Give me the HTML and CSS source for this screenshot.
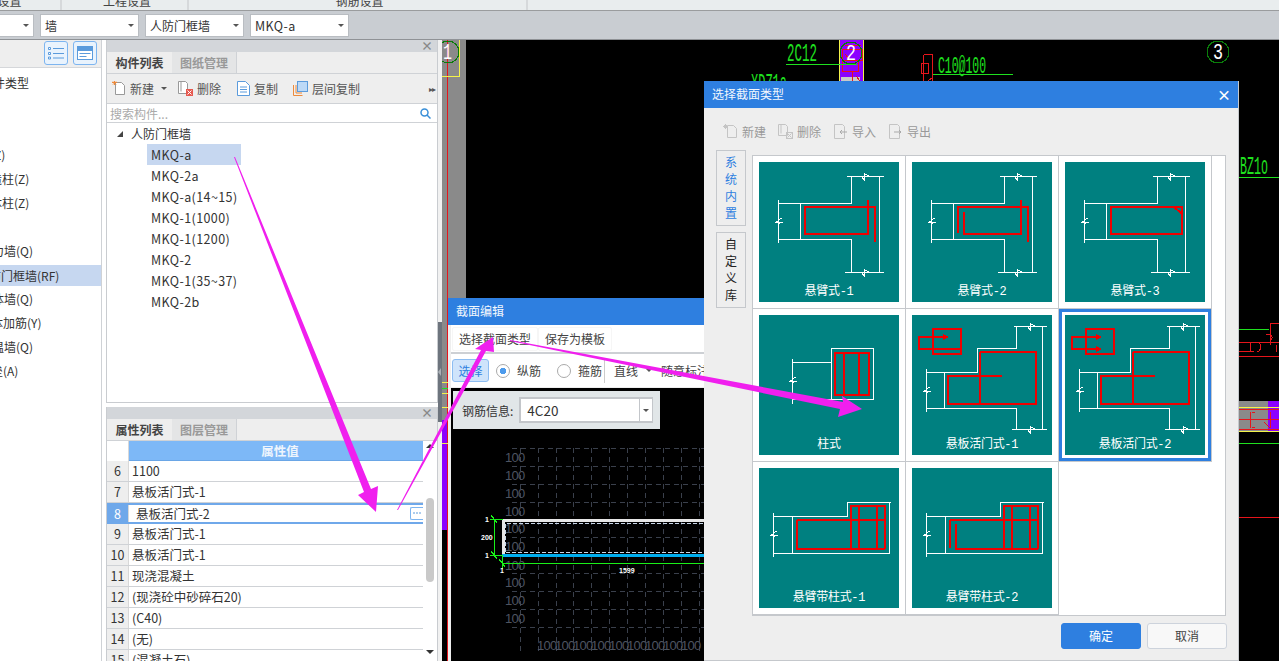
FILE: index.html
```html
<!DOCTYPE html>
<html lang="zh-CN">

<head>
    <meta charset="UTF-8">
    <title>截面编辑</title>
    <link rel="stylesheet" href="styles.css">
</head>

<body>
    <!-- shared drawing parts for the section type cards -->
    <svg class="defs" width="0" height="0">
        <defs>
            <g id="brk"><path d="M-4 1H4M3-3L-2 1 1 3"/></g>
            <g id="tick"><path d="M0-4V4M0-3L4-1 0 1M-2 1L0 3"/></g>
            <g id="wall-a">
                <path d="M88 14.5H125M92.5 14.5V41.5H19.5M19.5 38V81M41.5 41.5V77.5M19.5 77.5H92.5V110.5M86 110.5H125M120.5 14.5V110.5"/>
                <use href="#brk" x="19.5" y="59"/>
                <use href="#tick" x="105" y="14.5"/>
                <use href="#tick" x="105" y="110.5"/>
            </g>
            <g id="wall-b">
                <path d="M101.5 11.5H134.5M104.5 11.5V33.5H65.5V57.5H14.5M14.5 54V97M32.5 57.5V93.5M14.5 93.5H104.5V114.5M100 114.5H134.5M130.5 11.5V114.5"/>
                <use href="#brk" x="14.5" y="75"/>
                <use href="#tick" x="118" y="11.5"/>
                <use href="#tick" x="118" y="114.5"/>
            </g>
            <g id="wall-c">
                <path d="M14.5 48.5H88.5V34.5H132M14.5 45V89M33.5 48.5V85.5M14.5 85.5H130.5V34.5"/>
                <use href="#brk" x="14.5" y="66"/>
            </g>
            <g id="rebar-b">
                <path d="M68 37H124V89H36V61H90M68 37V89"/>
            </g>
            <g id="rebar-c">
                <path d="M92 81V38H126V81M100 38V81M118 38V81M38 52H126"/>
            </g>
        </defs>
    </svg>

    <div class="app">
        <div class="menubar">
            <span class="menu-cell menu-a">钢筋设置</span>
            <span class="menu-cell menu-b">工程设置</span>
            <span class="menu-cell menu-c">钢筋设置</span>
        </div>

        <div class="toolbar">
            <div class="combo combo-first"><i class="caret"></i></div>
            <div class="combo"><span>墙</span><i class="caret"></i></div>
            <div class="combo"><span>人防门框墙</span><i class="caret"></i></div>
            <div class="combo"><span class="latin">MKQ-a</span><i class="caret"></i></div>
        </div>

        <div class="workspace">
            <div class="nav">
                <div class="nav-head">
                    <span class="view-btn">
                        <svg width="18" height="14" viewBox="0 0 18 14"><path class="ico-blue" d="M1.5 1.5h2v2h-2zM1.5 6.5h2v2h-2zM1.5 11h2v2h-2zM6 2.5h11M6 7.5h11M6 12h11"/></svg>
                    </span>
                    <span class="view-btn">
                        <svg width="16" height="14" viewBox="0 0 16 14"><rect class="ico-blue" x=".5" y=".5" width="15" height="13"/><rect class="ico-fill" x=".5" y=".5" width="15" height="4.5"/><path class="ico-blue" d="M2.500 7.500h11M2.500 10.500h7"/></svg>
                    </span>
                </div>
                <div class="nav-list">
                    <div class="nav-item cut-a gap-1">构件类型</div>
                    <div class="nav-item cut-b gap-2">框架柱(Z)</div>
                    <div class="nav-item cut-c">构造柱(Z)</div>
                    <div class="nav-item cut-c">砌体柱(Z)</div>
                    <div class="nav-item cut-d gap-1">剪力墙(Q)</div>
                    <div class="nav-item cut-e selected">人防门框墙(RF)</div>
                    <div class="nav-item cut-d">砌体墙(Q)</div>
                    <div class="nav-item cut-f">砌体加筋(Y)</div>
                    <div class="nav-item cut-d">保温墙(Q)</div>
                    <div class="nav-item cut-g">墙垛墙垒(A)</div>
                </div>
            </div>

            <div class="panels">
                <div class="panel panel-top">
                    <div class="panel-title"><span class="close">×</span></div>
                    <div class="tabs">
                        <span class="tab active">构件列表</span>
                        <span class="tab">图纸管理</span>
                    </div>
                    <div class="actions">
                        <span class="action act-new">
                            <svg width="14" height="15" viewBox="0 0 14 15"><path class="ico-gray" d="M3.500 1.500h6l3 3v9h-9z"/><path class="ico-orange" d="M0 1.500h5M2.500 0v4M1 .5l3 3M4 .5l-3 3"/></svg>
                            新建<i class="caret"></i>
                        </span>
                        <span class="action act-del">
                            <svg width="15" height="15" viewBox="0 0 15 15"><path class="ico-gray" d="M.5.500h7l2 2v10h-9zM3 .5v10"/><rect class="ico-red" x="8" y="8" width="7" height="7"/><path class="ico-white" d="M9.500 9.500l4 4M13.500 9.500l-4 4"/></svg>
                            删除
                        </span>
                        <span class="action act-copy">
                            <svg width="13" height="15" viewBox="0 0 13 15"><path class="ico-blue" d="M.5.500h8l4 4v10H.5zM3 6h7M3 8.500h7M3 11h7"/></svg>
                            复制
                        </span>
                        <span class="action act-floor">
                            <svg width="15" height="15" viewBox="0 0 15 15"><path class="ico-orange" d="M.5 4v10.500h9"/><path class="ico-orange" d="M3 4v8h6"/><rect class="ico-sky" x="4.500" y=".5" width="10" height="10"/></svg>
                            层间复制
                        </span>
                        <span class="more">▸▸</span>
                    </div>
                    <div class="search">
                        <span>搜索构件...</span>
                        <svg width="11" height="11" viewBox="0 0 11 11"><circle class="ico-mag" cx="4.500" cy="4.500" r="3.500"/><path class="ico-mag" d="M7 7l3.500 3.500"/></svg>
                    </div>
                    <div class="tree">
                        <div class="tree-root"><i class="tree-arrow"></i>人防门框墙</div>
                        <div class="tree-item selected">MKQ-a</div>
                        <div class="tree-item">MKQ-2a</div>
                        <div class="tree-item">MKQ-a(14~15)</div>
                        <div class="tree-item">MKQ-1(1000)</div>
                        <div class="tree-item">MKQ-1(1200)</div>
                        <div class="tree-item">MKQ-2</div>
                        <div class="tree-item">MKQ-1(35~37)</div>
                        <div class="tree-item">MKQ-2b</div>
                    </div>
                </div>

                <div class="panel panel-bottom">
                    <div class="panel-title"><span class="close">×</span></div>
                    <div class="tabs">
                        <span class="tab active">属性列表</span>
                        <span class="tab">图层管理</span>
                    </div>
                    <div class="table">
                        <div class="table-rows">
                            <div class="thead"><span class="num"></span><span class="th">属性值</span></div>
                            <div class="row"><span class="num">6</span><span class="val">1100</span></div>
                            <div class="row"><span class="num">7</span><span class="val">悬板活门式-1</span></div>
                            <div class="row current">
                                <span class="num">8</span><span class="val">悬板活门式-2</span>
                                <span class="dots"><svg width="11" height="11" viewBox="0 0 11 11"><path class="dot-path" d="M2 5h2M5 5h2M8 5h2"/></svg></span>
                            </div>
                            <div class="row"><span class="num">9</span><span class="val">悬板活门式-1</span></div>
                            <div class="row"><span class="num">10</span><span class="val">悬板活门式-1</span></div>
                            <div class="row"><span class="num">11</span><span class="val">现浇混凝土</span></div>
                            <div class="row"><span class="num">12</span><span class="val">(现浇砼中砂碎石20)</span></div>
                            <div class="row"><span class="num">13</span><span class="val">(C40)</span></div>
                            <div class="row"><span class="num">14</span><span class="val">(无)</span></div>
                            <div class="row"><span class="num">15</span><span class="val">(混凝土石)</span></div>
                        </div>
                        <div class="vscroll">
                            <i class="arrow-up"></i>
                            <i class="thumb"></i>
                            <i class="arrow-down"></i>
                        </div>
                    </div>
                </div>
            </div>

            <div class="gutter">
                <div class="gutter-grip"><i></i></div>
            </div>

            <div class="canvas">
                <svg class="cad" width="837" height="621" viewBox="442 40 837 621">
                    <rect x="442" y="40" width="24" height="380" fill="#8a8a8a"/>
                    <rect x="442" y="420" width="5" height="110" fill="#8b00ff"/>
                    <path class="cad-red" d="M447.500 40V661"/>
                    <path class="cad-yel" d="M442 76.500H459.500V40M442 382.500H448M442 393.500H448M442 407.500H448M442 443.500H448"/>
                    <path class="cad-grn" d="M442 388.500H448"/>
                    <circle class="cad-dark" cx="448" cy="52" r="11"/>
                    <text class="cad-num" x="443" y="59" textLength="9" lengthAdjust="spacingAndGlyphs">1</text>

                    <rect x="840" y="40" width="23" height="41" fill="#8b00ff"/>
                    <path class="cad-yel" d="M839.500 40V81M863.500 40V81"/>
                    <rect x="841" y="77" width="19" height="4" fill="#c8c8c8"/>
                    <path class="cad-red" d="M842 49H862V60H842ZM845 54L850 60M858 60V71H842V50M852 71V81M856 76L860 81M845 45H861"/>
                    <circle class="cad-dark" cx="851" cy="53" r="11"/>
                    <text class="cad-num" x="846" y="60" textLength="10" lengthAdjust="spacingAndGlyphs">2</text>
                    <circle class="cad-dark" cx="1218" cy="52" r="11"/>
                    <text class="cad-num" x="1213" y="59" textLength="10" lengthAdjust="spacingAndGlyphs">3</text>

                    <text class="cad-label" x="787" y="61" textLength="30" lengthAdjust="spacingAndGlyphs">2C12</text>
                    <path class="cad-grn" d="M786 64.500H857M932 74.500H1013M1239 177.500H1279M1239 329.500H1269M1239 443.500H1279"/>
                    <text class="cad-label small" x="938" y="73" textLength="48" lengthAdjust="spacingAndGlyphs">C10@100</text>
                    <text class="cad-label" x="751" y="91" textLength="36" lengthAdjust="spacingAndGlyphs">XDZ1a</text>
                    <text class="cad-label" x="1240" y="174" textLength="28" lengthAdjust="spacingAndGlyphs">BZ1o</text>
                    <path class="cad-red" d="M923.500 54.500H932.500V81M923.500 54.500V81M921 63H928V73H921ZM932 78L928 81"/>

                    <path class="cad-red" d="M1279 323H1272Q1270 323 1270 326V345M1239 342.500H1279M1239 351.500H1254M1239 356.500H1279M1250 342V352M1257 342C1262 344 1262 350 1257 352M1266 335C1272 333 1274 338 1270 340M1276 345V352"/>
                    <rect x="1239" y="401" width="29" height="30" fill="#8a8a8a"/>
                    <rect x="1268" y="401" width="11" height="30" fill="#8b00ff"/>
                    <path class="cad-yel" d="M1239 407.500H1279M1239 431.500H1279"/>
                    <path class="cad-red" d="M1239 409.500H1279M1239 419.500H1279M1239 429.500H1279M1250 412V428M1270 412V428M1252 412H1255M1252 427H1255M1264 422L1270 428"/>
                    <path class="cad-red" d="M1239 517.500H1279"/>
                </svg>
            </div>
        </div>
    </div>

    <!-- section editor window, behind the type picker -->
    <div class="window win-editor">
        <div class="win-title">截面编辑</div>
        <div class="editor-menu">
            <span class="menu-btn">选择截面类型</span>
            <span class="menu-btn">保存为模板</span>
        </div>
        <div class="editor-tools">
            <span class="tool-active">选择</span>
            <span class="radio radio-on"></span><span class="radio-text">纵筋</span>
            <span class="radio radio-off"></span><span class="radio-text">箍筋</span>
            <span class="divider"></span>
            <span class="line-btn">直线<i class="caret"></i></span>
            <span class="line-btn2">随意标注</span>
        </div>
        <div class="editor-canvas">
            <svg class="section" width="400" height="273" viewBox="451 389 400 273">
                <g class="grid-line">
                    <path d="M512 449.500H850M512 467.500H850M512 485.500H850M512 503.500H850M512 521.500H850M512 538.500H850M512 574.500H850M512 592.500H850M512 610.500H850M512 628.500H850"/>
                    <path d="M520.500 449V652M538.500 449V652M556.500 449V652M573.500 449V652M591.500 449V652M609.500 449V652M627.500 449V652M645.500 449V652M663.500 449V652M681.500 449V652M699.500 449V652"/>
                </g>
                <g class="grid-text">
                    <text x="505" y="463">100</text>
                    <text x="505" y="481">100</text>
                    <text x="505" y="499">100</text>
                    <text x="505" y="517">100</text>
                    <text x="505" y="534">100</text>
                    <text x="505" y="552">100</text>
                    <text x="505" y="571">100</text>
                    <text x="505" y="588">100</text>
                    <text x="505" y="606">100</text>
                    <text x="505" y="624">100</text>
                    <text x="537" y="651">100</text>
                    <text x="555" y="651">100</text>
                    <text x="573" y="651">100</text>
                    <text x="591" y="651">100</text>
                    <text x="609" y="651">100</text>
                    <text x="627" y="651">100</text>
                    <text x="645" y="651">100</text>
                    <text x="663" y="651">100</text>
                    <text x="681" y="651">100</text>
                </g>
                <path class="sec-white" d="M503.500 557V521.500H850"/>
                <path class="sec-dash" d="M505.500 553V524.500H850M505.500 553.500H850"/>
                <path class="sec-blue" d="M502 556.500H850"/>
                <path class="sec-green" d="M494.500 520V556M490 520.500H503M490 556.500H503M502.500 556V570M502 564.500H850M491 516l6 8M491 552l6 8M499 560l6 8"/>
                <g class="sec-text">
                    <text x="485" y="523">1</text>
                    <text x="481" y="541">200</text>
                    <text x="485" y="559">1</text>
                    <text x="500" y="574">1</text>
                    <text x="619" y="574">1599</text>
                </g>
            </svg>
            <div class="rebar-box">
                <span>钢筋信息:</span>
                <div class="rebar-input"><span class="rebar-val">4C20</span><span class="rebar-drop"><i class="caret"></i></span></div>
            </div>
        </div>
    </div>

    <!-- section type picker -->
    <div class="window win-picker">
        <div class="win-title">选择截面类型<span class="win-close">×</span></div>
        <div class="picker-tools">
            <span class="ptool tool-new">
                <svg width="15" height="15" viewBox="0 0 15 15"><path class="ico-dim" d="M4.500 1.500h6l3 3v9h-9z"/><path class="ico-dim" d="M0 2.500h5M2.500 0v5M1 1l3 3M4 1l-3 3"/></svg>
                新建
            </span>
            <span class="ptool tool-del">
                <svg width="15" height="15" viewBox="0 0 15 15"><path class="ico-dim" d="M.5.500h7l2 2v9h-9zM3 .5v9"/><rect class="ico-dim" x="8.500" y="8.500" width="6" height="6"/><path class="ico-dim" d="M9.500 9.500l4 4M13.500 9.500l-4 4"/></svg>
                删除
            </span>
            <span class="ptool tool-imp">
                <svg width="15" height="15" viewBox="0 0 15 15"><path class="ico-dim" d="M1.500.5h8l2 2v12h-10z"/><path class="ico-dim2" d="M14 8H7M9 6L7 8l2 2"/></svg>
                导入
            </span>
            <span class="ptool tool-exp">
                <svg width="15" height="15" viewBox="0 0 15 15"><path class="ico-dim" d="M1.500.5h8l2 2v12h-10z"/><path class="ico-dim2" d="M6 8h7M11 6l2 2-2 2"/></svg>
                导出
            </span>
        </div>
        <div class="picker-main">
            <div class="side-tabs">
                <span class="side-tab current">系统内置</span>
                <span class="side-tab">自定义库</span>
            </div>
            <div class="type-grid">
                <div class="type-cell">
                    <div class="type-card">
                        <svg width="140" height="122" viewBox="0 0 140 122">
                            <use class="wh" href="#wall-a"/>
                            <path class="rd" d="M109 38V72H46V45H116V80"/>
                        </svg>
                        <span>悬臂式-1</span>
                    </div>
                </div>
                <div class="type-cell">
                    <div class="type-card">
                        <svg width="140" height="122" viewBox="0 0 140 122">
                            <use class="wh" href="#wall-a"/>
                            <path class="rd" d="M46 71V45H116V80M52 50V72H109V38"/>
                        </svg>
                        <span>悬臂式-2</span>
                    </div>
                </div>
                <div class="type-cell">
                    <div class="type-card">
                        <svg width="140" height="122" viewBox="0 0 140 122">
                            <use class="wh" href="#wall-a"/>
                            <path class="rd" d="M46 45H117V72H46ZM109 45L116 51"/>
                        </svg>
                        <span>悬臂式-3</span>
                    </div>
                </div>

                <div class="type-cell">
                    <div class="type-card">
                        <svg width="140" height="122" viewBox="0 0 140 122">
                            <g class="wh">
                                <path d="M72.500 33.500H114.500V84.500H72.500ZM33.500 47.500H72.500M33.500 44V89M33.500 84.500H72.500"/>
                                <use href="#brk" x="33.500" y="65"/>
                            </g>
                            <path class="rd" d="M76 38H110V80H76ZM85 38V80M100 38V80"/>
                        </svg>
                        <span>柱式</span>
                    </div>
                </div>
                <div class="type-cell">
                    <div class="type-card">
                        <svg width="140" height="122" viewBox="0 0 140 122">
                            <use class="wh" href="#wall-b"/>
                            <use class="rd" href="#rebar-b"/>
                            <path class="rd" d="M21 34V14H49V39H21V34M49 34H7V22H34M31 20L35 22 31 24"/>
                        </svg>
                        <span>悬板活门式-1</span>
                    </div>
                </div>
                <div class="type-cell selected">
                    <div class="type-card">
                        <svg width="140" height="122" viewBox="0 0 140 122">
                            <use class="wh" href="#wall-b"/>
                            <use class="rd" href="#rebar-b"/>
                            <path class="rd" d="M21 34V14H49V39H21V34M34 34H7V22H34M31 20L35 22 31 24M31 32L35 34 31 36"/>
                        </svg>
                        <span>悬板活门式-2</span>
                    </div>
                </div>

                <div class="type-cell">
                    <div class="type-card">
                        <svg width="140" height="122" viewBox="0 0 140 122">
                            <use class="wh" href="#wall-c"/>
                            <use class="rd" href="#rebar-c"/>
                            <path class="rd" d="M38 52V81H126"/>
                        </svg>
                        <span>悬臂带柱式-1</span>
                    </div>
                </div>
                <div class="type-cell">
                    <div class="type-card">
                        <svg width="140" height="122" viewBox="0 0 140 122">
                            <use class="wh" href="#wall-c"/>
                            <use class="rd" href="#rebar-c"/>
                            <path class="rd" d="M38 80V52M44 56V81H126"/>
                        </svg>
                        <span>悬臂带柱式-2</span>
                    </div>
                </div>
            </div>
        </div>
        <div class="picker-foot">
            <span class="btn btn-primary">确定</span>
            <span class="btn">取消</span>
        </div>
    </div>

    <!-- magenta annotation arrows drawn on top of the screenshot -->
    <svg class="arrows" width="1279" height="661" viewBox="0 0 1279 661">
        <polygon points="234,157 235,157 371,489 378,486 376,512 358,495 364,492"/>
        <polygon points="397,510 398,510 486,351 494,352 493,337 475,349 481,350"/>
        <polygon points="510,340 843,402 842,396 862,409 838,417 840,409 510,341"/>
    </svg>
</body>

</html>
```
FILE: styles.css
```css
* {
    margin: 0;
    padding: 0;
    box-sizing: border-box;
}

html, body {
    width: 1279px;
    height: 661px;
    overflow: hidden;
}

body {
    position: relative;
    font-family: "Noto Sans CJK SC", "Noto Sans", sans-serif;
    font-size: 12px;
    color: #333;
    background: #fff;
}

i {
    font-style: normal;
}

.defs {
    position: absolute;
}

.caret {
    display: inline-block;
    width: 0;
    height: 0;
    border-left: 3px solid transparent;
    border-right: 3px solid transparent;
    border-top: 3px solid #555;
}

/* top bars */
.app {
    display: flex;
    flex-direction: column;
    height: 661px;
}

.menubar {
    display: flex;
    height: 11px;
    flex: none;
    background: #e9edee;
    border-bottom: 1px solid #9a9c9e;
    overflow: hidden;
}

.menu-cell {
    flex: none;
    height: 10px;
    line-height: 1px;
    text-align: center;
    border-right: 2px solid #d6d9db;
    color: #444;
}

.menu-a { width: 127px; margin-left: -65px; }
.menu-b { width: 127px; padding-left: 5px; }
.menu-c { width: 339px; padding-left: 4px; }

.toolbar {
    display: flex;
    gap: 6px;
    height: 29px;
    flex: none;
    padding: 3px 0 0 0;
    background: #c9cdd2;
    border-bottom: 1px solid #8f9296;
}

.combo {
    display: flex;
    align-items: center;
    justify-content: space-between;
    width: 99px;
    height: 23px;
    padding: 0 4px;
    background: #fff;
    border: 1px solid #b9bdc2;
    font-size: 12px;
}

.combo-first {
    width: 35px;
    margin-left: -1px;
    justify-content: flex-end;
    border-left: none;
}

.latin {
    letter-spacing: .4px;
    font-size: 12.500px;
}

/* left navigation */
.workspace {
    display: flex;
    flex: 1;
    min-height: 0;
}

.nav {
    width: 102px;
    flex: none;
    border-right: 1px solid #cfd2d6;
    overflow: hidden;
}

.nav-head {
    display: flex;
    justify-content: flex-end;
    gap: 5px;
    height: 28px;
    padding: 1px 4px 0 0;
    background: #eeeeee;
    border-bottom: 1px solid #d5d7da;
}

.view-btn {
    display: flex;
    align-items: center;
    justify-content: center;
    width: 24px;
    height: 24px;
    background: #e9f3fd;
    border: 1px solid #7db5f0;
    border-radius: 3px;
}

.nav-list {
    height: 300px;
    white-space: nowrap;
}

.nav-item {
    height: 24px;
    line-height: 22px;
    color: #333;
}

.nav-item.selected {
    height: 21px;
    margin: 1px 0 2px;
    line-height: 21px;
    background: #c6d7f0;
}

.gap-1 { margin-top: 24px; }
.gap-2 { margin-top: 48px; }

.nav-item.gap-1:first-child { margin-top: 4px; }

/* the names start left of the window edge */
.cut-a { text-indent: -19px; }
.cut-b { text-indent: -46px; }
.cut-c { text-indent: -22px; }
.cut-d { text-indent: -20px; }
.cut-e { text-indent: -23px; }
.cut-f { text-indent: -21px; }
.cut-g { text-indent: -45px; }

/* middle panels */
.panels {
    display: flex;
    flex-direction: column;
    width: 332px;
    flex: none;
    margin-left: 4px;
    gap: 4px;
}

.panel {
    display: flex;
    flex-direction: column;
    border: 1px solid #c9ccd0;
    border-top: none;
    overflow: hidden;
}

.panel-top {
    height: 363px;
    flex: none;
}

.panel-bottom {
    flex: 1;
    min-height: 0;
    border-bottom: none;
}

.panel-title {
    display: flex;
    align-items: center;
    justify-content: flex-end;
    height: 12px;
    flex: none;
    padding-right: 4px;
    background: #d3d6da;
}

.close {
    font-size: 12px;
    line-height: 12px;
    font-weight: 700;
    color: #888;
}

.tabs {
    display: flex;
    height: 22px;
    flex: none;
    background: #eee;
    border-bottom: 1px solid #cfd2d6;
}

.tab {
    width: 65px;
    line-height: 21px;
    text-align: center;
    color: #999;
    font-weight: 700;
    background: #e4e5e6;
    border-right: 1px solid #cfd2d6;
}

.tab.active {
    color: #444;
    background: #eee;
    border-right: none;
}

.actions {
    position: relative;
    display: flex;
    align-items: center;
    height: 30px;
    flex: none;
    padding-left: 5px;
    background: #eee;
    border-bottom: 1px solid #cfd2d6;
}

.action {
    display: inline-flex;
    align-items: center;
    color: #555;
}

.action svg {
    margin-right: 4px;
}

.action .caret {
    margin-left: 7px;
}

.act-del { margin-left: 11px; }
.act-copy { margin-left: 16px; }
.act-floor { margin-left: 15px; }

.ico-gray { fill: #fff; stroke: #999; }
.ico-orange { fill: none; stroke: #ee8a3a; }
.ico-red { fill: #e6584e; stroke: none; }
.ico-white { fill: none; stroke: #fff; }
.ico-blue { fill: #fff; stroke: #5b9bdc; }
.ico-fill { fill: #5b9bdc; stroke: none; }
.ico-sky { fill: #bcd9f7; stroke: #5b9bdc; }
.ico-mag { fill: none; stroke: #3a8fd8; stroke-width: 1.500; }
.ico-dim { fill: none; stroke: #c4c4c4; }
.ico-dim2 { fill: none; stroke: #a9a9a9; }

.more {
    margin-left: auto;
    padding-right: 2px;
    font-size: 8px;
    letter-spacing: -1px;
    color: #555;
}

.search {
    display: flex;
    align-items: center;
    justify-content: space-between;
    height: 19px;
    flex: none;
    padding: 0 6px 0 3px;
    color: #aaa;
    background: #fff;
    border-bottom: 1px solid #cfd2d6;
}

.tree {
    flex: 1;
    padding-top: 0;
    background: #fff;
}

.tree-root {
    display: flex;
    align-items: center;
    height: 21px;
    padding-left: 10px;
    color: #333;
}

.tree-arrow {
    width: 0;
    height: 0;
    margin-right: 8px;
    border-left: 3px solid transparent;
    border-right: 3px solid #444;
    border-top: 3px solid transparent;
    border-bottom: 3px solid #444;
}

.tree-item {
    width: 94px;
    height: 21px;
    margin-left: 40px;
    padding-left: 4px;
    line-height: 21px;
    white-space: nowrap;
    letter-spacing: .4px;
    font-size: 12.500px;
    color: #333;
}

.tree-item.selected {
    background: #c6d7f0;
}

/* property table */
.table {
    display: flex;
    flex: 1;
    min-height: 0;
}

.table-rows {
    width: 316px;
    flex: none;
}

.thead {
    display: flex;
    height: 20px;
}

.thead .num {
    background: #fff;
}

.th {
    flex: 1;
    padding-left: 8px;
    line-height: 19px;
    text-align: center;
    font-weight: 700;
    font-size: 12.500px;
    color: #eef5fd;
    background: #7db8f7;
    border-bottom: 1px solid #6aa6e6;
}

.num {
    width: 22px;
    flex: none;
    text-align: center;
    background: #eee;
    border-right: 1px solid #d8d8d8;
    font-size: 12.500px;
}

.row {
    display: flex;
    height: 21px;
    line-height: 20px;
    border-bottom: 1px solid #cfd2d6;
}

.val {
    flex: 1;
    padding-left: 3px;
    font-size: 12.500px;
    white-space: nowrap;
}

.row.current {
    position: relative;
    border-top: 2px solid #6fa8ea;
    border-bottom: 2px solid #6fa8ea;
    line-height: 17px;
}

.row.current .num {
    color: #fff;
    background: #6fa8ea;
}

.row.current .val {
    padding-left: 7px;
}

.dots {
    position: absolute;
    top: 2px;
    right: 0;
    display: flex;
    width: 13px;
    height: 13px;
    background: #fff;
    border: 1px solid #7db5f0;
    border-right: none;
    border-radius: 2px 0 0 2px;
}

.dot-path {
    fill: none;
    stroke: #5b9bdc;
}

.vscroll {
    position: relative;
    flex: 1;
}

.thumb {
    position: absolute;
    top: 57px;
    left: 3px;
    width: 8px;
    height: 84px;
    background: #c9c9c9;
    border-radius: 4px;
}

.arrow-up, .arrow-down {
    position: absolute;
    left: 3px;
    width: 0;
    height: 0;
    border-left: 4px solid transparent;
    border-right: 4px solid transparent;
}

.arrow-up {
    top: 3px;
    border-bottom: 4px solid #333;
}

.arrow-down {
    top: 209px;
    border-top: 4px solid #333;
}

/* splitter between the panels and the drawing */
.gutter {
    width: 4px;
    flex: none;
    padding-top: 282px;
    background: #f1f1f1;
}

.gutter-grip {
    display: flex;
    align-items: center;
    height: 100px;
    background: #6d747d;
}

.gutter-grip i {
    width: 0;
    height: 0;
    border-top: 4px solid transparent;
    border-bottom: 4px solid transparent;
    border-right: 3px solid #aab0b6;
}

/* CAD drawing */
.canvas {
    flex: 1;
    min-width: 0;
    background: #000;
}

.cad {
    display: block;
    shape-rendering: crispEdges;
}

.cad-red, .cad-yel, .cad-grn {
    fill: none;
}

.cad-red { stroke: #e6151b; }
.cad-yel { stroke: #f4f34a; }
.cad-grn { stroke: #1fe01f; }

.cad-dark {
    fill: none;
    stroke: #0a7d0a;
}

.cad-num {
    font-family: "Liberation Mono", monospace;
    font-size: 22px;
    fill: #fff;
}

.cad-label {
    font-family: "Liberation Mono", monospace;
    font-size: 26px;
    fill: #1fe01f;
}

.cad-label.small {
    font-size: 23px;
}

/* floating windows */
.window {
    position: absolute;
    background: #eee;
}

.win-title {
    position: relative;
    height: 27px;
    padding-left: 8px;
    line-height: 26px;
    color: #f2f7fd;
    background: #2e7fe0;
}

/* section editor */
.win-editor {
    left: 448px;
    top: 298px;
    width: 400px;
    height: 380px;
    padding: 0;
}

.editor-menu {
    display: flex;
    height: 29px;
    margin-left: 3px;
    padding: 2px 0 0 1px;
    background: #fff;
    border-bottom: 2px solid #cdd0d4;
}

.menu-btn {
    height: 24px;
    padding: 0 6px;
    line-height: 24px;
    color: #444;
    background: #fff;
    border: 1px solid #f6f6f6;
    border-radius: 2px;
    line-height: 22px;
}

.editor-tools {
    display: flex;
    align-items: center;
    height: 33px;
    margin-left: 3px;
    padding-left: 1px;
    background: #fff;
    color: #444;
}

.tool-active {
    width: 37px;
    height: 23px;
    margin-right: 7px;
    line-height: 21px;
    text-align: center;
    color: #2e7fe0;
    background: #cfe4fb;
    border: 1px solid #8dbdf2;
    border-radius: 3px;
}

.radio {
    width: 14px;
    height: 14px;
    margin-right: 7px;
    border: 1px solid #aaa;
    border-radius: 50%;
    background: #fff;
}

.radio-on {
    background: radial-gradient(circle, #4d9bec 0 3px, #fff 3.500px);
}

.radio-text {
    margin-right: 16px;
}

.radio-text + .divider {
    margin-left: -14px;
}

.divider {
    width: 1px;
    height: 24px;
    margin-right: 4px;
    background: #ccc;
}

.line-btn {
    display: inline-flex;
    align-items: center;
    gap: 8px;
    width: 47px;
    margin-right: 5px;
    padding-left: 5px;
}

.line-btn2 {
    white-space: nowrap;
}

.editor-canvas {
    position: relative;
    height: 273px;
    margin: 1px 0 0 3px;
    background: #000;
}

.section {
    display: block;
    shape-rendering: crispEdges;
}

.grid-line path {
    fill: none;
    stroke: #3a404c;
    stroke-dasharray: 5 4;
}

.grid-text text {
    font-family: "Liberation Sans", sans-serif;
    font-size: 13px;
    letter-spacing: -.7px;
    fill: #4e5460;
}

.sec-white {
    fill: none;
    stroke: #e6e6e6;
    stroke-width: 3;
}

.sec-dash {
    fill: none;
    stroke: #c9d6e8;
    stroke-dasharray: 4 2;
}

.sec-blue {
    fill: none;
    stroke: #00aeef;
    stroke-width: 3;
}

.sec-green {
    fill: none;
    stroke: #19ef19;
}

.sec-text text {
    font-family: "Liberation Sans", sans-serif;
    font-size: 7px;
    font-weight: 700;
    fill: #fff;
}

.rebar-box {
    position: absolute;
    left: 2px;
    top: 3px;
    display: flex;
    align-items: center;
    gap: 6px;
    width: 207px;
    height: 38px;
    padding: 0 7px 0 9px;
    background: #e1e6e8;
    color: #333;
}

.rebar-input {
    display: flex;
    flex: 1;
    height: 26px;
    background: #fff;
    border: 2px solid #c3c6ca;
    border-right-width: 1px;
}

.rebar-val {
    flex: 1;
    padding-left: 6px;
    line-height: 22px;
    font-size: 13.500px;
}

.rebar-drop {
    display: flex;
    align-items: center;
    justify-content: center;
    width: 13px;
    border-left: 1px solid #c3c6ca;
}

/* section type picker */
.win-picker {
    left: 704px;
    top: 81px;
    width: 535px;
    height: 580px;
    border-right: 1px solid #c5c8cc;
    border-bottom: 1px solid #c5c8cc;
}

.win-close {
    position: absolute;
    right: 7px;
    top: 0;
    font-size: 14px;
    font-weight: 700;
    line-height: 26px;
    color: #fff;
}

.picker-tools {
    display: flex;
    align-items: center;
    height: 40px;
    padding: 6px 0 0 19px;
    color: #999;
}

.ptool {
    display: inline-flex;
    align-items: center;
    gap: 4px;
    width: 55px;
}

.picker-main {
    display: flex;
    align-items: flex-start;
    height: 467px;
    margin-top: 1px;
    padding-left: 12px;
    position: relative;
}

.side-tabs {
    display: flex;
    flex-direction: column;
    gap: 6px;
    width: 30px;
    margin-top: 1px;
    flex: none;
}

.side-tab {
    display: flex;
    align-items: center;
    justify-content: center;
    height: 76px;
    padding-top: 4px;
    writing-mode: vertical-rl;
    text-orientation: upright;
    letter-spacing: 5px;
    color: #222;
    border: 1px solid #c5c8cc;
}

.side-tab.current {
    color: #2e7fe0;
}

.type-grid {
    display: grid;
    grid-template-columns: repeat(3, 153px);
    grid-auto-rows: 153px;
    width: 474px;
    height: 461px;
    margin: 6px 0 0 6px;
    background: #fff;
    border: 1px solid #c5c8cc;
}

.type-cell {
    padding: 6px;
    border-right: 1px solid #c5c8cc;
    border-bottom: 1px solid #c5c8cc;
}

.type-cell.selected {
    box-shadow: inset 0 0 0 3px #2e7fe0;
}

.type-card {
    display: flex;
    flex-direction: column;
    align-items: center;
    width: 140px;
    height: 140px;
    background: #008080;
}

.type-card svg {
    display: block;
    flex: none;
    shape-rendering: crispEdges;
}

.type-card span {
    margin-top: 1px;
    font-family: "Liberation Mono", "Noto Sans CJK SC", monospace;
    font-size: 12px;
    line-height: 14px;
    letter-spacing: -.3px;
    color: #fff;
}

.wh {
    fill: none;
    stroke: #fff;
}

.wh use, .wh path {
    fill: none;
    stroke: #fff;
}

.rd {
    fill: none;
    stroke: #f00000;
    stroke-width: 2;
}

.picker-foot {
    display: flex;
    justify-content: flex-end;
    gap: 6px;
    padding: 7px 11px 0 0;
}

.btn {
    width: 80px;
    height: 26px;
    line-height: 24px;
    text-align: center;
    color: #444;
    background: #f8f8f8;
    border: 1px solid #cdd3dc;
    border-radius: 3px;
}

.btn-primary {
    color: #fff;
    background: #2e7fe0;
    border-color: #2e7fe0;
}

/* annotation layer */
.arrows {
    position: absolute;
    left: 0;
    top: 0;
    pointer-events: none;
}

.arrows polygon {
    fill: #f01fee;
}
```
